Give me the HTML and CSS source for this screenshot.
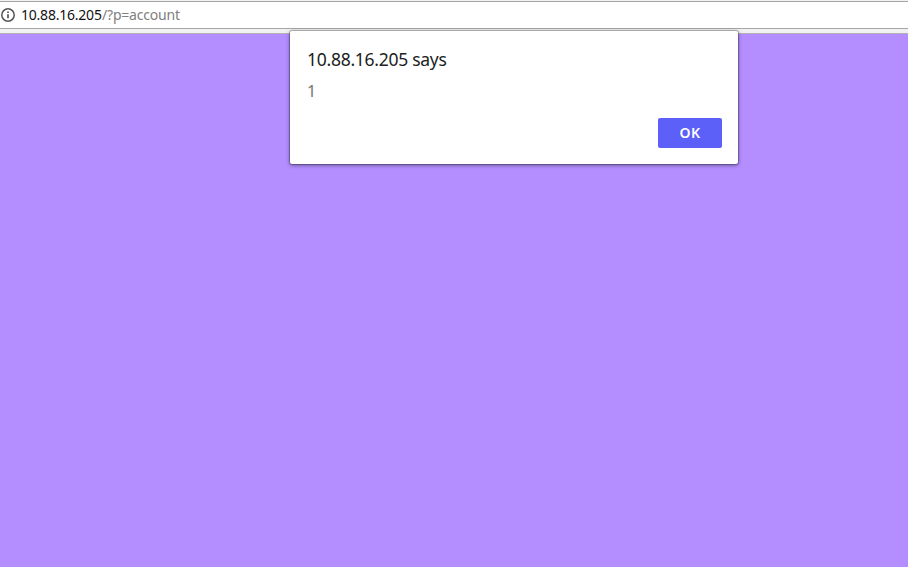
FILE: index.html
```html
<!DOCTYPE html>
<html lang="en">
<head>
<meta charset="utf-8">
<title>10.88.16.205</title>
<link rel="stylesheet" href="styles.css">
</head>
<body>
<header class="toolbar">
  <div class="address">
    <svg class="info" width="16" height="16" viewBox="0 0 16 16" aria-hidden="true"><circle cx="8" cy="8" r="6.2" fill="none" stroke="#555" stroke-width="1.5"/><path d="M8 7.2v4M8 4.5v1.6" stroke="#555" stroke-width="1.7"/></svg>
    <span class="host">10.88.16.205</span><span class="path">/?p=account</span>
  </div>
</header>
<main class="page"></main>
<section class="dialog" role="dialog">
  <h1 class="title">10.88.16.205 says</h1>
  <p class="message">1</p>
  <button class="ok">OK</button>
</section>
</body>
</html>
```

FILE: styles.css
```css
* { box-sizing: border-box; }
body {
  margin: 0;
  height: 567px;
  display: flex;
  flex-direction: column;
  overflow: hidden;
  font-family: "Noto Sans", "Open Sans", sans-serif;
}
.toolbar {
  height: 34px;
  padding-top: 1px;
  background: #f2f1f1;
  border-bottom: 1px solid #b5b0b8;
}
.address {
  height: 28px;
  display: flex;
  align-items: center;
  background: #fff;
  border-top: 1px solid #a6a6a6;
  border-bottom: 1px solid #a6a6a6;
  font-size: 14px;
  line-height: 20px;
}
.info { flex: none; margin-right: 5px; }
.host { width: 81px; color: #111; letter-spacing: -0.22px; white-space: nowrap; }
.path { color: #808080; letter-spacing: -0.2px; }
.page { flex: 1; background: #b48eff; }
.dialog {
  position: absolute;
  left: 290px;
  top: 31px;
  width: 448px;
  height: 133px;
  padding: 16px 16px 16px 17px;
  display: flex;
  flex-direction: column;
  background: #fff;
  border-radius: 2px;
  box-shadow: 0 0 0 1px rgba(0, 0, 0, .2), 0 1px 4px rgba(0, 0, 0, .5);
}
.title {
  margin: 0;
  font-size: 17.5px;
  line-height: 24px;
  font-weight: 400;
  letter-spacing: -0.27px;
  color: #212121;
}
.message { margin: 9px 0 0; font-size: 16px; line-height: 22px; color: #757575; }
.ok {
  margin-top: auto;
  align-self: flex-end;
  width: 64px;
  height: 30px;
  padding: 0;
  border: 0;
  border-radius: 2px;
  background: #5c5ff8;
  color: #fff;
  font: 600 14px/30px "Noto Sans", sans-serif;
  letter-spacing: 0.4px;
}
```
